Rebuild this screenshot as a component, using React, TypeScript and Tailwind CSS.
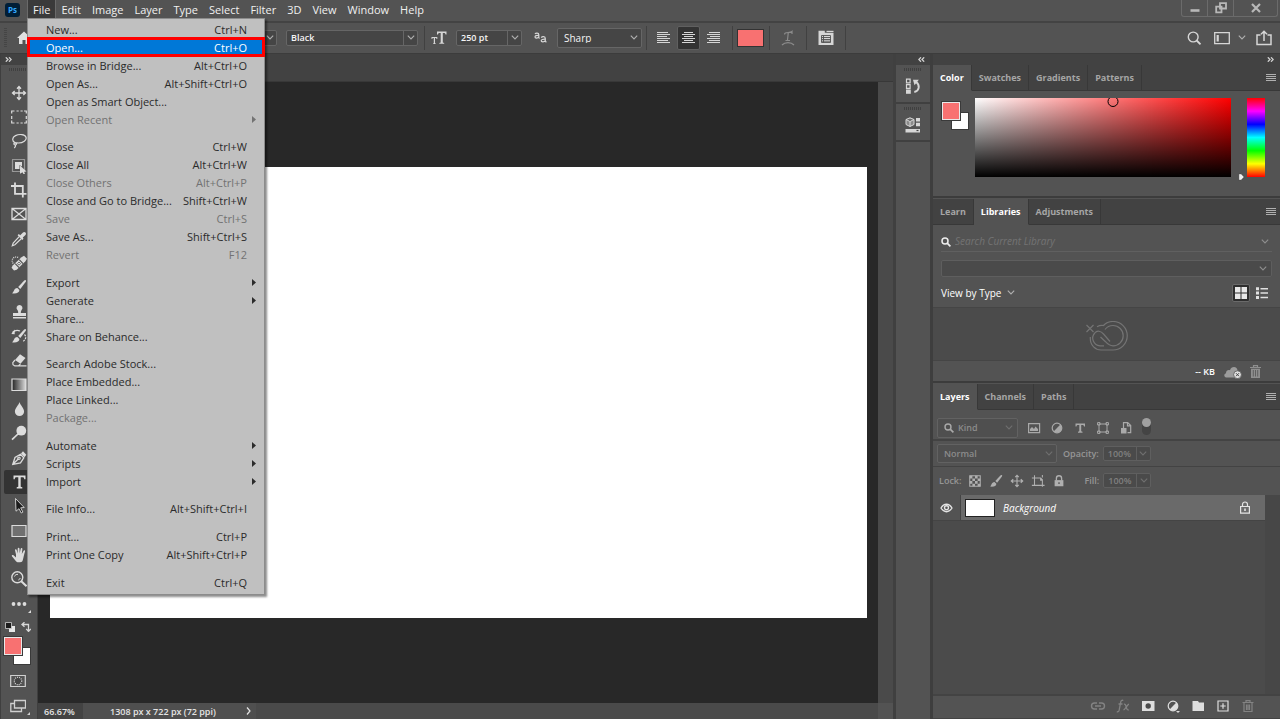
import React from "react";

type IconProps = { className?: string; box?: string; children: React.ReactNode };

function Icon({ className = "size-4", box = "0 0 16 16", children }: IconProps) {
  return (
    <svg className={`shrink-0 ${className}`} viewBox={box} fill="none" stroke="currentColor" strokeWidth="1.2" aria-hidden="true">
      {children}
    </svg>
  );
}

function Chevron({ className = "text-[#b0b0b0]" }: { className?: string }) {
  return (
    <svg className={`h-[5px] w-2 shrink-0 ${className}`} viewBox="0 0 8 5" fill="none" stroke="currentColor" strokeWidth="1.1" aria-hidden="true">
      <path d="M.8.7 4 4 7.2.7" />
    </svg>
  );
}

/* ---------- File menu ---------- */

type Entry = { label: string; keys?: string; off?: boolean; sub?: boolean; active?: boolean };

const fileMenu: { gap: string; items: Entry[] }[] = [
  {
    gap: "mb-[9px]",
    items: [
      { label: "New...", keys: "Ctrl+N" },
      { label: "Open...", keys: "Ctrl+O", active: true },
      { label: "Browse in Bridge...", keys: "Alt+Ctrl+O" },
      { label: "Open As...", keys: "Alt+Shift+Ctrl+O" },
      { label: "Open as Smart Object..." },
      { label: "Open Recent", off: true, sub: true },
    ],
  },
  {
    gap: "mb-[10px]",
    items: [
      { label: "Close", keys: "Ctrl+W" },
      { label: "Close All", keys: "Alt+Ctrl+W" },
      { label: "Close Others", keys: "Alt+Ctrl+P", off: true },
      { label: "Close and Go to Bridge...", keys: "Shift+Ctrl+W" },
      { label: "Save", keys: "Ctrl+S", off: true },
      { label: "Save As...", keys: "Shift+Ctrl+S" },
      { label: "Revert", keys: "F12", off: true },
    ],
  },
  {
    gap: "mb-[9px]",
    items: [
      { label: "Export", sub: true },
      { label: "Generate", sub: true },
      { label: "Share..." },
      { label: "Share on Behance..." },
    ],
  },
  {
    gap: "mb-[10px]",
    items: [
      { label: "Search Adobe Stock..." },
      { label: "Place Embedded..." },
      { label: "Place Linked..." },
      { label: "Package...", off: true },
    ],
  },
  {
    gap: "mb-[9px]",
    items: [
      { label: "Automate", sub: true },
      { label: "Scripts", sub: true },
      { label: "Import", sub: true },
    ],
  },
  { gap: "mb-[10px]", items: [{ label: "File Info...", keys: "Alt+Shift+Ctrl+I" }] },
  {
    gap: "mb-[10px]",
    items: [
      { label: "Print...", keys: "Ctrl+P" },
      { label: "Print One Copy", keys: "Alt+Shift+Ctrl+P" },
    ],
  },
  { gap: "mb-0", items: [{ label: "Exit", keys: "Ctrl+Q" }] },
];

function FileMenu() {
  return (
    <div
      role="menu"
      aria-label="File"
      className="absolute top-[18px] left-[27px] z-10 w-[238px] border border-[#8c8c8c] bg-[#c0c0c0] pt-px pb-[3px] text-[11px] text-[#2b2b2b] shadow-[2px_2px_2px_rgba(0,0,0,0.45)]"
    >
      {fileMenu.map((group, i) => (
        <div key={i} className={group.gap}>
          {group.items.map((item) => (
            <button
              key={item.label}
              role="menuitem"
              disabled={item.off}
              className={`flex h-[18px] w-full items-center pl-[18px] text-left leading-none whitespace-nowrap disabled:text-[#727272] ${
                item.active ? "bg-[#0078d7] text-white outline-3 -outline-offset-2 outline-[#ff0000]" : ""
              }`}
            >
              <span className="flex-1">{item.label}</span>
              {item.keys && <span className="mr-[17px]">{item.keys}</span>}
              {item.sub && (
                <svg className="mr-2 h-[7px] w-1" viewBox="0 0 4 7" fill="currentColor" aria-hidden="true">
                  <path d="M0 0 4 3.5 0 7z" />
                </svg>
              )}
            </button>
          ))}
        </div>
      ))}
    </div>
  );
}

function MenuBar() {
  const names = ["File", "Edit", "Image", "Layer", "Type", "Select", "Filter", "3D", "View", "Window", "Help"];
  return (
    <header className="relative flex h-[23px] shrink-0 border-b-2 border-[#434343]">
      <span className="mt-[3px] mr-2 ml-[5px] grid h-[14px] w-[15px] place-items-center rounded-[3px] bg-[#001e36] text-[8px] leading-none font-bold text-[#31a8ff]">
        Ps
      </span>
      <nav className="flex h-[19px] gap-px text-[11px] leading-none text-[#f0f0f0]">
        {names.map((name) => (
          <button key={name} className={`px-[5px] ${name === "File" ? "bg-[#3a3a3a] outline outline-[#6a6a6a]" : ""}`}>
            {name}
          </button>
        ))}
      </nav>
      <FileMenu />
      <div className="mr-[2px] ml-auto flex h-[17px] rounded-b-[3px] border border-t-0 border-[#6b6b6b] text-[#b8b8b8]">
        <button aria-label="Minimize" className="grid w-[26px] place-items-center border-r border-[#6b6b6b]">
          <Icon className="size-3" box="0 0 12 12">
            <path d="M1.5 8.500h9" strokeWidth="2.6" />
          </Icon>
        </button>
        <button aria-label="Restore" className="grid w-[26px] place-items-center border-r border-[#6b6b6b]">
          <Icon className="size-3" box="0 0 12 12">
            <path d="M5 1.2h6v5.300H5zM1.200 4.700h5.300v5.600H1.200z" strokeWidth="1.8" />
          </Icon>
        </button>
        <button aria-label="Close" className="grid w-[43px] place-items-center">
          <Icon className="size-3" box="0 0 12 12">
            <path d="m2 2 8 8M10 2l-8 8" strokeWidth="2.2" />
          </Icon>
        </button>
      </div>
    </header>
  );
}

/* ---------- Options bar ---------- */

function Divider({ className = "" }: { className?: string }) {
  return <span className={`h-6 w-px shrink-0 bg-[#414141] ${className}`} />;
}

function ComboBox({ label, value, className }: { label: string; value: string; className: string }) {
  return (
    <div className={`flex h-4 items-center rounded-[2px] border border-[#666] bg-[#454545] ${className}`}>
      <input aria-label={label} defaultValue={value} className="h-full min-w-0 flex-1 bg-transparent pl-1 text-[9px] leading-none font-semibold text-[#f4f4f4] outline-none" />
      <button aria-label={`${label} options`} className="grid h-full w-[14px] place-items-center border-l border-[#666]">
        <Chevron />
      </button>
    </div>
  );
}

const alignLines: Record<string, string> = {
  left: "M1 2.500h11M1 4.500h13M1 6.500h10M1 8.500h13M1 10.500h11M1 12.500h13",
  center: "M3 2.500h9M1 4.500h13M3 6.500h9M1 8.500h13M3 10.500h9M1 12.500h13",
  right: "M3 2.500h11M1 4.500h13M4 6.500h10M1 8.500h13M3 10.500h11M1 12.500h13",
};

function OptionsBar() {
  return (
    <div className="flex h-[31px] shrink-0 items-center border-b border-[#3c3c3c] pb-px text-[#d6d6d6]">
      <span className="mr-[9px] ml-1 h-5 w-[3px] bg-[repeating-linear-gradient(#454545_0_1px,transparent_1px_2px)]" />
      <button aria-label="Home" className="grid w-4 place-items-center">
        <Icon className="size-4 text-[#e0e0e0]">
          <path d="M8 1.500 1 8h2v6h3.500v-4h3v4H13V8h2z" fill="currentColor" stroke="none" />
        </Icon>
      </button>
      <ComboBox label="Font family" value="" className="ml-[85px] w-[160px]" />
      <ComboBox label="Font style" value="Black" className="ml-[9px] w-[132px]" />
      <Divider className="ml-[6px]" />
      <Icon className="ml-[6px] h-4 w-4 text-[#d6d6d6]">
        <path d="M6 1.500h9.500v3h-1c0-1-.5-1.600-1.500-1.600h-1.200v9.500l1.400.6v.7H8.300v-.7l1.400-.6V2.900H8.500C7.500 2.900 7 3.500 7 4.500H6zM.5 7h5.800v2h-.7c0-.6-.3-1-.9-1H4v5.200l.8.3v.6H2v-.6l.8-.3V8h-.7c-.6 0-.9.4-.9 1H.5z" fill="currentColor" stroke="none" />
      </Icon>
      <ComboBox label="Font size" value="250 pt" className="ml-[9px] w-[66px]" />
      <span className="ml-3 flex w-[14px] leading-none text-[#d6d6d6]" aria-label="Anti-aliasing" role="img">
        <Icon className="h-4 w-[14px]" box="0 0 14 16">
          <path d="M1 4c.6-1 3.800-1.500 3.800.8v2.800c0 .5.4.6.9.5M4.800 5.400C2.500 5.300 1 5.700 1 7s2.800 1.600 3.800-.1M7.300 7.600c.7-1.300 4-1.600 4 .8v2.800c0 .5.5.7 1.200.5M11.300 9.200c-2.400-.1-4.100.3-4.100 1.600s3 1.600 4.100-.1" />
        </Icon>
      </span>
      <div className="ml-[9px] flex h-5 w-[85px] items-center rounded-[2px] border border-[#666] bg-[#454545] pr-[3px]">
        <select aria-label="Anti-aliasing method" className="h-full min-w-0 flex-1 appearance-none bg-transparent pl-[6px] text-[10px] leading-none font-medium text-[#f4f4f4]">
          <option>Sharp</option>
        </select>
        <Chevron />
      </div>
      <Divider className="ml-1" />
      <div className="ml-1 flex">
        {["left", "center", "right"].map((side) => (
          <button
            key={side}
            aria-label={`Align ${side}`}
            className={`mx-px grid h-6 w-[23px] place-items-center rounded-[2px] ${side === "center" ? "border border-[#606060] bg-[#333]" : ""}`}
          >
            <Icon className="size-[15px]" box="0 0 15 15">
              <path d={alignLines[side]} strokeWidth="1" />
            </Icon>
          </button>
        ))}
      </div>
      <Divider className="ml-[6px]" />
      <button aria-label="Text color" className="ml-1 h-[18px] w-[27px] border border-[#333] bg-[#f87171]" />
      <Divider className="ml-[5px]" />
      <button aria-label="Warp text" className="mx-[10px] text-[#8b8b8b]">
        <Icon className="size-4">
          <path d="M4.500 4.500c0-1.500 1-2 3.500-2s3.500-.5 4-1v2.500M8.300 2.500 7.500 10M5.500 10.500h4.500M2 15c3-3.300 9-3.300 12 0" />
        </Icon>
      </button>
      <Divider />
      <button aria-label="Character and paragraph panels" className="mx-[11px]">
        <Icon className="size-4">
          <path d="M.5.8h6.300v2h8.700V15H.5z" fill="currentColor" stroke="none" />
          <path d="M8.500 1.400h7" />
          <path d="M3.500 5.500h9v7h-9zM5.500 5.500v7M3.500 7.500h9M3.500 9.500h9M3.500 11.200h9" stroke="#505050" strokeWidth=".9" />
        </Icon>
      </button>
      <Divider />
      <div className="mr-2 ml-auto flex items-center">
        <button aria-label="Search">
          <Icon>
            <circle cx="7.200" cy="7" r="4.900" strokeWidth="1.400" />
            <path d="m10.700 10.500 3.800 3.900" strokeWidth="1.800" />
          </Icon>
        </button>
        <button aria-label="Workspace" className="ml-3 flex items-center gap-[8px]">
          <Icon className="size-4">
            <path d="M.7 2.700h14.600v11H.7z" strokeWidth="1.300" />
            <path d="M3.700 5v6.500" strokeWidth="2.200" />
          </Icon>
          <Chevron />
        </button>
        <button aria-label="Share" className="ml-[10px]">
          <Icon className="size-4" box="0 0 16 16">
            <path d="M4.500 5H1v9.500h14V5h-3.500M8 11V1.500M5 4.300l3-3 3 3" strokeWidth="1.500" />
          </Icon>
        </button>
      </div>
    </div>
  );
}

/* ---------- Toolbar ---------- */

const moveIcon = <path d="M8 2v12M2 8h12M6 3.700 8 1.500l2 2.200M6 12.300l2 2.200 2-2.200M3.700 6 1.500 8l2.200 2M12.300 6l2.200 2-2.200 2" strokeWidth="1.300" />;
const brushIcon = (
  <>
    <path d="M14.700 1.200c.6.5.4 1-.1 1.800L9.300 10 7.200 8.100 13 1.700c.6-.6 1.200-.9 1.700-.5z" fill="currentColor" stroke="none" />
    <path d="M6.300 9.100 8.400 11c.1 2.600-3 4-7.400 3.300 2.200-.8 1.500-4.900 5.300-5.200z" fill="currentColor" stroke="none" />
  </>
);

const toolGroups: { name: string; art: React.ReactNode }[][] = [
  [
    { name: "Move", art: moveIcon },
    { name: "Rectangular marquee", art: <path d="M3.500 2H.7v2.500M.7 7v3M.7 11.500V14h2.800M5.500 14h2.200M9.500 14h2.200M13 14h2.300v-2.500M15.300 10V7M15.300 4.500V2H13M5.500 2h2.200M9.500 2h2.200" /> },
    {
      name: "Lasso",
      art: <path d="M4 9.600C.8 8 1 4.300 4.500 2.600 8.300.8 14 1.200 15 4.200c1 3-3 5.800-7.500 5.800-1.800 0-3.800-.5-4.500.4-.6 1.300 1.500 2 2.300 1 .6-.9-.4-1.600-1.300-1.400M4.500 12c.2 1.300-.2 2.200-1.200 3" />,
    },
  ],
  [
    {
      name: "Object selection",
      art: (
        <>
          <path d="M1.500 1.500h12v12h-12z" strokeDasharray="1 1" />
          <path d="M4 4h7v4.500L8.500 7v4H4z" fill="currentColor" stroke="none" />
          <path d="m9 7.500 6.500 6-2.500.2 1 2-1.500.5-1-2L9 15.800z" fill="currentColor" stroke="none" />
        </>
      ),
    },
    { name: "Crop", art: <path d="M4 .5v11.300h11.500M0 4h11.800v11.500" strokeWidth="1.800" /> },
    { name: "Frame", art: <path d="M1 2.500h14v11H1zM1 2.500l14 11M15 2.500l-14 11" strokeWidth="1.300" /> },
  ],
  [
    {
      name: "Eyedropper",
      art: (
        <>
          <path d="M9.200 4.200 12 1.500c1.700-1.600 4 .7 2.500 2.400l-2.700 2.700.7 1.200-1.200 1.200-4.700-4.700 1.200-1.200z" fill="currentColor" stroke="none" />
          <path d="m8.200 5.700-6 6.400-.9 2.600 2.600-.9 6.300-6" />
        </>
      ),
    },
    {
      name: "Spot healing brush",
      art: (
        <>
          <path d="M2.200 8.500C-.5 5 2.500.5 7.500 2.500" strokeDasharray="1 1" strokeWidth="1.300" />
          <path d="M10.500 2.200 13 .8l3 3-1.600 2.500-8.700 8.500L3 15.500.6 12.700 1.700 10.600z" fill="currentColor" stroke="none" />
          <path d="M8.200 4.700 12 8.600M4.200 8.700l3.900 3.900" stroke="#535353" />
          <path d="m8 7 1.600 1.600L8 10.200 6.500 8.600z" stroke="#535353" strokeWidth=".8" />
        </>
      ),
    },
    { name: "Brush", art: brushIcon },
  ],
  [
    {
      name: "Clone stamp",
      art: <path d="M8.500 1a3 3 0 0 1 2.100 5.100c-.6.7-.8 1.600-.8 2.900H15v3H2V9h5.200c0-1.300-.2-2.200-.8-2.900A3 3 0 0 1 8.500 1zM2 13h13v1.500H2z" fill="currentColor" stroke="none" />,
    },
    {
      name: "History brush",
      art: (
        <>
          {brushIcon}
          <path d="M1.500 4.500c2-2 5-2.700 7.500-1.500" strokeWidth="1.300" />
          <path d="M3.700 1.500v4.700L.3 6z" fill="currentColor" stroke="none" />
          <path d="M13.500 6.500c2 2 1.500 5-1.500 7" strokeDasharray="2 1" />
        </>
      ),
    },
    {
      name: "Eraser",
      art: (
        <>
          <path d="M9 2.300 14.500 6l-5 5.800L4 8z" fill="currentColor" stroke="none" />
          <path d="M4 8 1.800 10.700l.2 2 1.800 1.200h3.500l2.200-2M8 13.900h7.500" />
        </>
      ),
    },
  ],
  [
    {
      name: "Gradient",
      art: (
        <>
          <defs>
            <linearGradient id="tool-gradient">
              <stop offset="0" stopColor="#222" />
              <stop offset="1" stopColor="#ddd" />
            </linearGradient>
          </defs>
          <path d="M1 2h14v11.500H1z" fill="url(#tool-gradient)" />
        </>
      ),
    },
    { name: "Blur", art: <path d="M8.500 1c.5 2.800 4.600 6 4.600 9.500a4.600 4.600 0 0 1-9.200 0C3.900 7 8 3.800 8.500 1z" fill="currentColor" stroke="none" /> },
    {
      name: "Dodge",
      art: (
        <>
          <circle cx="10.300" cy="5.700" r="4.900" fill="currentColor" stroke="none" />
          <path d="m7.500 8.500-6.500 6.200" strokeWidth="1.700" />
        </>
      ),
    },
  ],
  [
    {
      name: "Pen",
      art: (
        <>
          <path d="M1.800 14.300 4 7.500l5.500-3.200 3.300 3.500-3.300 5zM1.800 14.300 7.500 8.700" strokeWidth="1.300" />
          <circle cx="8" cy="8.300" r="1.200" />
          <path d="m10 3.500 2-2.300 3.300 3.500-1.700 2.500z" fill="currentColor" stroke="none" />
        </>
      ),
    },
    {
      name: "Type",
      art: <path d="M2.500 1.500h12v3.800h-1.300c0-1.500-.5-2-1.700-2H9.700v9.500l1.600.5v1.200h-5.600v-1.200l1.600-.5V3.300H5.500c-1.200 0-1.700.5-1.700 2H2.500z" fill="currentColor" stroke="none" />,
    },
    {
      name: "Path selection",
      art: <path d="m4.500.5 8.700 9-3.500.3 2.200 4.300-1.700.9L8 10.700l-3 2.500z" fill="#1c1c1c" stroke="#d8d8d8" strokeWidth=".9" />,
    },
  ],
  [
    { name: "Rectangle", art: <path d="M1 2.500h14v11H1z" fill="#707070" strokeWidth="1.200" /> },
    {
      name: "Hand",
      art: <path d="M5 7.500 4 3.300C3.900 2 5.400 1.800 5.700 3l.9 3.500L6.700 1.700c0-1.300 1.700-1.300 1.800 0L8.700 6.300 9.700 1.700c.3-1.200 1.800-.9 1.700.4L10.800 6.900l1.700-3c.6-1.100 1.900-.4 1.500.7-1.100 3-1.200 5.300-2.200 8.400-.3 1.300-1.200 2.300-2.700 2.300H7.300c-1.300 0-2.200-.7-2.900-1.800L.9 9.300c-.6-1 .7-1.900 1.600-1L5 10.500z" fill="currentColor" stroke="none" />,
    },
    {
      name: "Zoom",
      art: (
        <>
          <circle cx="6.300" cy="6.300" r="5.500" strokeWidth="1.400" />
          <path d="m10.300 10.200 5.200 5" strokeWidth="2" />
          <path d="M3.500 5.500C4 3.800 5.500 3.200 7 3.400M9.300 7c-.3 1-1 1.600-2 2" strokeWidth="1" />
        </>
      ),
    },
  ],
  [
    {
      name: "Edit toolbar",
      art: (
        <g fill="currentColor" stroke="none">
          <circle cx="2.500" cy="8" r="1.900" />
          <circle cx="8" cy="8" r="1.900" />
          <circle cx="13.500" cy="8" r="1.900" />
        </g>
      ),
    },
  ],
];

function Corner({ className }: { className: string }) {
  return (
    <svg className={`absolute size-[3px] ${className}`} viewBox="0 0 3 3" fill="currentColor" aria-hidden="true">
      <path d="M3 0v3H0z" />
    </svg>
  );
}

function Grip({ className = "" }: { className?: string }) {
  return <span className={`block h-[3px] w-[18px] bg-[repeating-linear-gradient(90deg,#404040_0_1px,transparent_1px_2px)] ${className}`} />;
}

function Collapse({ dir, className = "" }: { dir: "left" | "right"; className?: string }) {
  return (
    <button aria-label={dir === "left" ? "Expand panels" : "Collapse panels"} className={className}>
      <Icon className="h-[5px] w-[7px] text-[#d0d0d0]" box="0 0 7 5">
        <path d={dir === "left" ? "M3 .3.8 2.500 3 4.700M6.200.3 4 2.500l2.200 2.200" : "m.8.3 2.200 2.200L.8 4.700M4 .3l2.200 2.200L4 4.700"} strokeWidth="1.300" />
      </Icon>
    </button>
  );
}

function ColorPair({ className = "" }: { className?: string }) {
  return (
    <div className={`grid h-7 w-[27px] ${className}`}>
      <button aria-label="Background color" className="col-start-1 row-start-1 size-[18px] place-self-end border border-[#3a3a3a] bg-white" />
      <button aria-label="Foreground color" className="z-[1] col-start-1 row-start-1 size-[18px] border border-[#e8e8e8] bg-[#f87171] outline outline-[#3a3a3a]" />
    </div>
  );
}

function Toolbar() {
  return (
    <aside className="flex w-[38px] shrink-0 flex-col border-r border-l border-[#3f3f3f]">
      <div className="flex h-[11px] shrink-0 items-center bg-[#424242]">
        <Collapse dir="right" className="ml-1" />
      </div>
      <Grip className="mt-[3px] ml-2 shrink-0" />
      <div className="mt-[10px] flex flex-col gap-px text-[#dcdcdc]">
        {toolGroups.map((group, i) => (
          <div key={i}>
            {group.map((tool) => (
              <button
                key={tool.name}
                aria-label={tool.name}
                className={`relative ml-[3px] grid h-6 w-[30px] place-items-center rounded-[2px] ${tool.name === "Type" ? "bg-[#333]" : ""}`}
              >
                <Icon>{tool.art}</Icon>
                {tool.name === "Edit toolbar" && <Corner className="right-[3px] bottom-[3px]" />}
              </button>
            ))}
          </div>
        ))}
      </div>
      <div className="mt-[6px] flex h-[10px] items-center justify-between pr-[6px] pl-1">
        <button aria-label="Default colors">
          <Icon className="size-[10px]" box="0 0 10 10">
            <path d="M4 4h6v6H4z" fill="#e8e8e8" stroke="none" />
            <path d="M.5.5h6v6h-6z" fill="#1c1c1c" stroke="#d0d0d0" strokeWidth=".8" />
          </Icon>
        </button>
        <button aria-label="Swap colors" className="text-[#d8d8d8]">
          <Icon className="size-[10px]" box="0 0 10 10">
            <path d="M1 2.500h6.500V9M3.500.2.9 2.500l2.600 2.300M5.200 6.900l2.300 2.500 2.300-2.500" strokeWidth="1.300" />
          </Icon>
        </button>
      </div>
      <ColorPair className="mt-[5px] ml-[3px]" />
      <button aria-label="Quick mask mode" className="mt-[7px] ml-[2px] grid h-[18px] w-[30px] place-items-center text-[#d0d0d0]">
        <Icon>
          <path d="M.7 2.500h14.600v11H.7z" />
          <circle cx="8" cy="8" r="3.700" strokeDasharray="1 1" fill="#444" />
        </Icon>
      </button>
      <button aria-label="Screen mode" className="relative mt-[7px] flex h-[18px] w-full items-center pl-[9px] text-[#d0d0d0]">
        <Icon>
          <path d="M4.500 2.500h11v7.500h-11zM4 5.500H.8v8h10.700V10.500" strokeWidth="1.300" />
        </Icon>
        <Corner className="right-[7px] bottom-0" />
      </button>
    </aside>
  );
}

/* ---------- Document ---------- */

function Document() {
  return (
    <main className="flex min-w-0 flex-1 flex-col bg-[#282828]">
      <div className="h-7 shrink-0 border-b border-[#383838] bg-[#424242]" />
      <div className="flex min-h-0 flex-1">
        <div className="flex min-w-0 flex-1 items-center pr-[11px] pl-3">
          <div className="aspect-[1308/722] w-full bg-white" />
        </div>
        <div className="w-[15px] shrink-0 bg-[#4a4a4a]" />
      </div>
      <footer className="flex h-[16px] shrink-0 items-center bg-[#4a4a4a] text-[9px] leading-none font-semibold text-[#e4e4e4]">
        <span className="flex h-full w-[45px] items-center bg-[#434343] pl-[6px]">66.67%</span>
        <button className="flex h-full w-[173px] items-center justify-between bg-[#4f4f4f] pr-[5px] pl-[27px]">
          1308 px x 722 px (72 ppi)
          <Icon className="h-2 w-[5px]" box="0 0 5 8">
            <path d="m1 .5 3 3.500-3 3.500" />
          </Icon>
        </button>
        <span className="ml-auto h-full w-[15px] bg-[#535353]" />
      </footer>
    </main>
  );
}

function CollapsedDock() {
  return (
    <aside className="flex w-[37px] shrink-0 flex-col border-l-3 border-[#404040]">
      <div className="flex h-[11px] shrink-0 items-center justify-end bg-[#424242] pr-[5px]">
        <Collapse dir="left" />
      </div>
      <div className="flex h-[39px] shrink-0 flex-col items-center border-b-2 border-[#404040] pt-[3px] text-[#d6d6d6]">
        <Grip />
        <button aria-label="History" className="mt-[7px]">
          <Icon>
            <path d="M1.500 1.200h3.600v3.600H1.500zM1.500 6.700h3.600v3.600H1.500z" />
            <path d="M1 11.500h4.800v4.300H1z" fill="currentColor" stroke="none" />
            <path d="M9.300 14c5-1 6-6.500 2-10" strokeWidth="1.900" />
            <path d="M8 1.800h5.800L9.500 7.200z" fill="currentColor" stroke="none" />
          </Icon>
        </button>
      </div>
      <div className="flex h-[38px] shrink-0 flex-col items-center border-b-2 border-[#404040] pt-[3px] text-[#d6d6d6]">
        <Grip />
        <button aria-label="Properties" className="mt-[7px]">
          <Icon>
            <path d="M5 .8 9 2.500v5L5 9.500 1 7.500v-5zM1 2.500l4 2 4-2M5 4.500v5" strokeWidth="1" fill="#8a8a8a" />
            <path d="M11 1h4v3.500h-4zM11 5.700h4v3.500h-4zM.5 12h14.500v3.500H.5z" fill="currentColor" stroke="none" />
            <path d="M11.500 13.500h2" stroke="#444" />
          </Icon>
        </button>
      </div>
    </aside>
  );
}

/* ---------- Panels ---------- */

function Tabs({ names, active }: { names: string[]; active: string }) {
  return (
    <div role="tablist" className="flex h-[26px] shrink-0 bg-[#424242] text-[9px] leading-none font-bold">
      {names.map((name) => (
        <button
          key={name}
          role="tab"
          aria-selected={name === active}
          className={`border-r border-b border-r-[#383838] px-[7px] ${name === active ? "border-b-[#535353] bg-[#535353] text-white" : "border-b-[#383838] text-[#a6a6a6]"}`}
        >
          {name}
        </button>
      ))}
      <div className="flex flex-1 items-center justify-end border-b border-[#383838] pr-[4px]">
        <button aria-label="Panel menu" className="text-[#b0b0b0]">
          <Icon className="h-2 w-[10px]" box="0 0 10 8">
            <path d="M0 .5h10M0 2.500h10M0 4.500h10M0 6.500h10" strokeWidth="1" />
          </Icon>
        </button>
      </div>
    </div>
  );
}

function ColorPanel() {
  return (
    <section aria-label="Color" className="shrink-0 border-b-2 border-[#3c3c3c]">
      <Tabs names={["Color", "Swatches", "Gradients", "Patterns"]} active="Color" />
      <div className="flex h-[105px] pt-[7px] pr-[15px] pl-[9px]">
        <ColorPair className="mt-1" />
        <div className="relative ml-[6px] h-[79px] flex-1 overflow-hidden bg-[linear-gradient(to_top,#000,transparent),linear-gradient(to_right,#fff,#f00)]">
          <span className="absolute -top-[2px] left-[54%] size-[11px] -translate-x-1/2 rounded-full border border-black" />
        </div>
        <svg className="mt-[75px] ml-[7px] h-2 w-[7px]" viewBox="0 0 7 8" aria-hidden="true">
          <path d="M.7.7h2.500L6.300 4 3.200 7.300H.7z" fill="#eee" stroke="#333" strokeWidth=".7" />
        </svg>
        <div className="ml-[2px] h-[79px] w-[18px] bg-[linear-gradient(#f00,#f0f,#00f,#0ff,#0f0,#ff0,#f00)]" />
      </div>
    </section>
  );
}

function LibrariesPanel() {
  return (
    <section aria-label="Libraries" className="mt-px shrink-0 border-b-2 border-[#3c3c3c]">
      <Tabs names={["Learn", "Libraries", "Adjustments"]} active="Libraries" />
      <div className="px-2 pt-[7px]">
        <label className="flex h-5 items-center border-b border-[#606060] pr-[3px]">
          <Icon className="size-[10px] text-[#ededed]" box="0 0 10 10">
            <circle cx="4" cy="4" r="3" strokeWidth="1.500" />
            <path d="m6.200 6.200 3.200 3.200" strokeWidth="1.700" />
          </Icon>
          <input aria-label="Search Current Library" placeholder="Search Current Library" className="ml-1 min-w-0 flex-1 bg-transparent text-[10px] italic outline-none placeholder:text-[#737373]" />
          <Chevron className="text-[#8f8f8f]" />
        </label>
        <div className="mt-2 flex h-[17px] items-center rounded-[2px] border border-[#5e5e5e] bg-[#4a4a4a] pr-1">
          <select aria-label="Library" className="h-full flex-1 appearance-none bg-transparent">
            <option></option>
          </select>
          <Chevron className="text-[#8f8f8f]" />
        </div>
        <div className="flex h-[30px] items-center pt-px text-[10px] leading-none text-white">
          <button className="flex items-center gap-[6px] font-medium">
            View by Type
            <Chevron />
          </button>
          <button aria-label="Grid view" className="mr-[5px] ml-auto grid size-[18px] place-items-center rounded-[2px] border border-[#6a6a6a] bg-[#2e2e2e]">
            <Icon className="size-3" box="0 0 12 12">
              <path d="M0 0h5.500v5.500H0zM6.500 0H12v5.500H6.500zM0 6.500h5.500V12H0zM6.500 6.500H12V12H6.500z" fill="#e8e8e8" stroke="none" />
            </Icon>
          </button>
          <button aria-label="List view" className="mr-[3px] text-[#e0e0e0]">
            <Icon className="size-[14px]" box="0 0 14 14">
              <path d="M1 1.300h3v3H1zM1 5.600h3v3H1zM1 9.900h3v3H1z" fill="currentColor" stroke="none" />
              <path d="M5.500 2.800H13M5.500 7.100H13M5.500 11.400H13" strokeWidth="1.500" />
            </Icon>
          </button>
        </div>
      </div>
      <div className="grid h-[54px] place-items-center border-y border-[#454545] bg-[#4b4b4b] pt-1 text-[#747474]">
        <Icon className="h-[30px] w-[43px]" box="0 0 43 30">
          <path d="m1.500 4 7 7M8.500 4l-7 7" />
          <path d="M5.300 16v1.500C5.300 24.500 10.500 29 16 29h12a14 14 0 0 0 0-28.500c-4.500 0-7.500 1.700-9.500 4-2.500-.4-4.500.1-6.500 1.200" />
          <path d="M25 20.500 18.500 13C16 10 12 9 9.800 12a7.700 7.700 0 0 0 5.200 12.900h4" />
          <path d="M20 8.500c1.800-2.500 4.500-4 8-4a10.200 10.200 0 0 1 0 20.400c-3.500 0-5.500-2-7.500-4.200L15.500 16" />
        </Icon>
      </div>
      <div className="flex h-[20px] items-center justify-end pr-[19px] text-[9px] leading-none font-semibold text-white">
        <span>-- KB</span>
        <Icon className="ml-2 h-[15px] w-[19px] text-[#9c9c9c]" box="0 0 19 15">
          <path d="M4 13.500C1 13.500.3 10 3 9.200 3 6.500 5.300 5.500 7 6.300 8.200 1.500 14.700 2 14.500 7L16 13.500z" fill="currentColor" stroke="none" />
          <circle cx="14.500" cy="10.700" r="3.900" fill="#e0e0e0" stroke="#535353" strokeWidth=".8" />
          <path d="m13 9.200 3 3M16 9.200l-3 3" stroke="#444" strokeWidth="1" />
        </Icon>
        <button aria-label="Delete" className="ml-[8px] text-[#8e8e8e]">
          <Icon className="h-[13px] w-[11px]" box="0 0 11 13">
            <path d="M0 2.500h11M3.500 2V.7h4V2" />
            <path d="M1 3.700h9V13H1z" fill="currentColor" stroke="none" />
            <path d="M3.300 5v6.500M5.500 5v6.500M7.700 5v6.500" stroke="#535353" strokeWidth=".8" />
          </Icon>
        </button>
      </div>
    </section>
  );
}

function PercentField({ id, label }: { id: string; label: string }) {
  return (
    <>
      <label htmlFor={id}>{label}</label>
      <div className="ml-1 flex h-[15px] w-12 items-center rounded-[2px] border border-[#5f5f5f] bg-[#4a4a4a]">
        <input id={id} defaultValue="100%" className="h-full min-w-0 flex-1 bg-transparent pl-1 leading-none text-[#808080] outline-none" />
        <button aria-label={`${label} slider`} className="grid h-full w-[14px] shrink-0 place-items-center border-l border-[#5f5f5f]">
          <Chevron className="text-[#707070]" />
        </button>
      </div>
    </>
  );
}

const halfCircle = (
  <>
    <circle cx="8" cy="8" r="4.800" />
    <path d="M11.400 4.600a4.800 4.800 0 0 1-6.800 6.800z" fill="currentColor" stroke="none" />
  </>
);

const filters: { name: string; art: React.ReactNode }[] = [
  {
    name: "Filter pixel layers",
    art: (
      <>
        <path d="M2.600 3.600h11v9h-11z" />
        <path d="M4 11V9l2-2 2 2 1.500-2.500L12 9v2z" fill="currentColor" stroke="none" />
      </>
    ),
  },
  { name: "Filter adjustment layers", art: halfCircle },
  {
    name: "Filter type layers",
    art: <path d="M3.500 3.500h9.500v3h-1c-.1-1-.5-1.500-1.500-1.500H9.200v6.300l1.300.4v1H6v-1l1.300-.4V5H6c-1 0-1.400.5-1.500 1.500h-1z" fill="currentColor" stroke="none" />,
  },
  { name: "Filter shape layers", art: <path d="M4 4h8v8H4zM2.600 2.600h2.400v2.400H2.600zM11 2.600h2.400v2.400H11zM2.600 11h2.400v2.400H2.600zM11 11h2.400v2.400H11z" fill="#535353" strokeWidth="1" /> },
  {
    name: "Filter smart objects",
    art: (
      <>
        <path d="M5.500 8V2.600h4.200l3 3v7H9.500M9.500 2.600v3.200h3" />
        <path d="M3 8h5.500v5.500H3z" fill="currentColor" stroke="none" />
      </>
    ),
  },
];

const lockBody = (
  <>
    <path d="M3 7h10v7H3z" fill="currentColor" stroke="none" />
    <path d="M5 7.500V5c0-4 6-4 6 0v2.500" strokeWidth="1.500" />
    <path d="M8 9.300v2.200" stroke="#535353" strokeWidth="1.500" />
  </>
);

const locks: { name: string; art: React.ReactNode }[] = [
  {
    name: "Lock transparent pixels",
    art: (
      <>
        <path d="M2 2h12v12H2z" />
        <path d="M2 2h3v3H2zM8 2h3v3H8zM5 5h3v3H5zM11 5h3v3h-3zM2 8h3v3H2zM8 8h3v3H8zM5 11h3v3H5zM11 11h3v3h-3z" fill="currentColor" stroke="none" />
      </>
    ),
  },
  { name: "Lock image pixels", art: brushIcon },
  { name: "Lock position", art: moveIcon },
  { name: "Prevent auto-nesting", art: <path d="M4 1.500v12M1 4.500h10l2 2v8M1 13h14.500M13 1v3M11 4.500V7h2" /> },
  { name: "Lock all", art: lockBody },
];

const actions: { name: string; tone: string; art: React.ReactNode }[] = [
  { name: "Link layers", tone: "text-[#838383]", art: <path d="M7 5H4.500a3 3 0 0 0 0 6H7M9 5h2.500a3 3 0 0 1 0 6H9M5 8h6" strokeWidth="1.400" /> },
  {
    name: "Layer effects",
    tone: "text-[#838383]",
    art: <path d="M8.300 2.500c-1.400-.7-2.300.2-2.600 1.700L4.200 12c-.3 1.500-1 2.200-2.400 1.700M3.500 6h4M9 6.200c1.500-.3 1.800 1 2.300 3s1 3 2.500 2.600M14 6.200c-1.500.2-4 5.400-5.500 5.700" strokeWidth="1.300" />,
  },
  {
    name: "Add layer mask",
    tone: "text-[#dedede]",
    art: (
      <>
        <path d="M2 3h12.500v10H2z" fill="currentColor" stroke="none" />
        <circle cx="8.200" cy="8" r="2.700" fill="#4a4a4a" stroke="none" />
      </>
    ),
  },
  {
    name: "New adjustment layer",
    tone: "text-[#dedede]",
    art: (
      <>
        {halfCircle}
        <path d="M11 13h4l-2 2z" fill="currentColor" stroke="none" />
      </>
    ),
  },
  { name: "New group", tone: "text-[#dedede]", art: <path d="M2.500 3H8l1 1.500h5V13H2.500z" fill="currentColor" stroke="none" /> },
  { name: "New layer", tone: "text-[#dedede]", art: <path d="M3 3h10v10H3zM8 5.300v5.400M5.300 8h5.400" /> },
  { name: "Delete layer", tone: "text-[#838383]", art: <path d="M2.500 4.500h11M6 4V2.600h4V4M4 5v8.500h8V5M6.500 6.500V12M8 6.500V12M9.500 6.500V12" /> },
];

function LayersPanel() {
  return (
    <section aria-label="Layers" className="mt-px flex min-h-0 flex-1 flex-col text-[9px] font-semibold">
      <Tabs names={["Layers", "Channels", "Paths"]} active="Layers" />
      <div className="flex h-[31px] shrink-0 items-center border-b-2 border-[#434343] pt-[6px] pl-1 text-[#a9a9a9]">
        <div className="mr-2 flex h-5 w-[81px] items-center rounded-[2px] border border-[#626262] bg-[#4f4f4f] pr-1 pl-[6px]">
          <Icon className="size-[10px]" box="0 0 10 10">
            <circle cx="4" cy="4" r="3" strokeWidth="1.400" />
            <path d="m6.200 6.200 3.200 3.200" strokeWidth="1.700" />
          </Icon>
          <select aria-label="Filter type" className="h-full min-w-0 flex-1 appearance-none bg-transparent pl-1 leading-none text-[#8c8c8c]">
            <option>Kind</option>
          </select>
          <Chevron className="text-[#6f6f6f]" />
        </div>
        <div className="flex gap-[7px]">
          {filters.map((f) => (
            <button key={f.name} aria-label={f.name}>
              <Icon>{f.art}</Icon>
            </button>
          ))}
        </div>
        <button aria-label="Toggle layer filtering" className="mb-[3px] ml-2 flex h-[17px] w-[9px] flex-col rounded-full bg-[#444]">
          <span className="size-[9px] rounded-full bg-[#a0a0a0]" />
        </button>
      </div>
      <div className="flex h-[26px] shrink-0 items-center border-b border-[#434343] pl-1 leading-none text-[#969696]">
        <div className="mr-[6px] flex h-[19px] w-[120px] items-center rounded-[2px] border border-[#626262] bg-[#4f4f4f] pr-[3px]">
          <select aria-label="Blend mode" className="h-full min-w-0 flex-1 appearance-none bg-transparent pl-[6px] text-[#8c8c8c]">
            <option>Normal</option>
          </select>
          <Chevron className="text-[#6f6f6f]" />
        </div>
        <PercentField id="opacity" label="Opacity:" />
      </div>
      <div className="flex h-7 shrink-0 items-center pb-px pl-[6px] leading-none text-[#969696]">
        <span>Lock:</span>
        <div className="mr-[18px] ml-[7px] flex gap-[7px] text-[#b0b0b0]">
          {locks.map((l) => (
            <button key={l.name} aria-label={l.name}>
              <Icon className="size-[14px]">{l.art}</Icon>
            </button>
          ))}
        </div>
        <PercentField id="fill" label="Fill:" />
      </div>
      <div className="flex min-h-0 flex-1 bg-[#4b4b4b]">
        <div className="flex-1">
          <div className="flex h-[26px] items-stretch border-b border-[#444]">
            <button aria-label="Hide layer" className="grid w-7 place-items-center border-r border-[#444] bg-[#535353] text-[#e4e4e4]">
              <Icon className="h-[10px] w-[13px]" box="0 0 13 10">
                <path d="M1 5c3-5 8-5 11 0-3 5-8 5-11 0z" strokeWidth="1.300" />
                <circle cx="6.500" cy="4.700" r="2" strokeWidth="1.400" />
              </Icon>
            </button>
            <div className="flex flex-1 items-center bg-[#6a6a6a] pr-[14px] pl-1">
              <span className="h-[18px] w-[30px] border border-[#222] bg-white" />
              <span className="ml-2 flex-1 text-[10px] leading-none font-medium text-white italic">Background</span>
              <Icon className="h-[13px] w-3 text-[#e4e4e4]" box="0 0 12 13">
                <path d="M1.600 5.500h8.800v6.700H1.600zM3.500 5.500V3.700c0-3.600 5-3.600 5 0v1.800" />
                <path d="M6 7.500v2.500" strokeWidth="1.600" />
              </Icon>
            </div>
          </div>
        </div>
        <div className="w-[15px] bg-[#474747]" />
      </div>
      <footer className="flex h-[25px] shrink-0 items-center justify-end gap-[9px] border-t-2 border-b border-[#434343] pr-6 pb-[2px]">
        {actions.map((a) => (
          <button key={a.name} aria-label={a.name} className={a.tone}>
            <Icon>{a.art}</Icon>
          </button>
        ))}
      </footer>
    </section>
  );
}

export default function App() {
  return (
    <div className="flex h-screen flex-col overflow-hidden bg-[#535353] font-['Open_Sans','Noto_Sans',sans-serif]">
      <MenuBar />
      <OptionsBar />
      <div className="flex min-h-0 flex-1">
        <Toolbar />
        <Document />
        <CollapsedDock />
        <aside className="flex w-[350px] shrink-0 flex-col border-l-3 border-[#3e3e3e]">
          <div className="flex h-[11px] shrink-0 items-center justify-end bg-[#424242] pr-[6px]">
            <Collapse dir="right" />
          </div>
          <ColorPanel />
          <LibrariesPanel />
          <LayersPanel />
        </aside>
      </div>
    </div>
  );
}
